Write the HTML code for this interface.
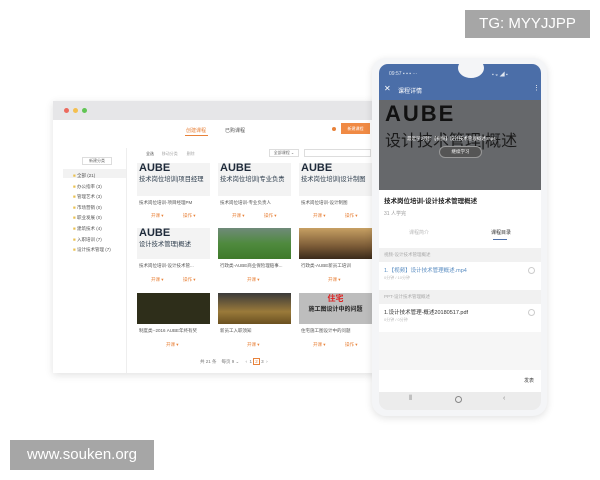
<!DOCTYPE html><html><head><meta charset="utf-8"><style>
*{margin:0;padding:0;box-sizing:border-box}
body{width:600px;height:480px;background:#fff;position:relative;overflow:hidden;font-family:"Liberation Sans","Noto Sans CJK SC",sans-serif;font-size:5px;color:#666}
.a{position:absolute}
.card{position:absolute;width:73px;height:70px}
.img{position:absolute;left:0;top:0;width:73px;height:33px;background:#eee;overflow:hidden}
.aube{font-weight:bold;font-size:11px;color:#1e2a3a;line-height:11px;padding-left:2px}
.sub{font-size:6.3px;color:#2a3a4a;padding-left:2px;white-space:nowrap}
.ct{position:absolute;top:37px;left:2px;font-size:4.5px;color:#555;white-space:nowrap}
.op{position:absolute;top:50px;font-size:4.5px;color:#e8823a}
</style></head><body>
<div class="a" style="left:465px;top:10px;width:125px;height:28px;background:#a6a6a6;color:#fff;font-size:15px;line-height:28px;text-align:center">TG: MYYJJPP</div>
<div class="a" style="left:10px;top:440px;width:144px;height:30px;background:#a6a6a6;color:#fff;font-size:15px;line-height:30px;text-align:center">www.souken.org</div>

<div class="a" style="left:53px;top:101px;width:325px;height:272px;background:#fff;box-shadow:0 2px 8px rgba(0,0,0,.12)">
 <div class="a" style="left:0;top:0;width:325px;height:19px;background:#e6e6e8"></div>
 <div class="a" style="left:11px;top:7px;width:5px;height:5px;border-radius:50%;background:#ec6a5e"></div>
 <div class="a" style="left:20px;top:7px;width:5px;height:5px;border-radius:50%;background:#f4bf4f"></div>
 <div class="a" style="left:29px;top:7px;width:5px;height:5px;border-radius:50%;background:#61c554"></div>
 <div class="a" style="left:133px;top:26px;color:#e8823a">创建课程</div>
 <div class="a" style="left:132px;top:34px;width:23px;height:1px;background:#e8823a"></div>
 <div class="a" style="left:172px;top:26px;color:#555">已购课程</div>
 <div class="a" style="left:279px;top:26px;width:4px;height:4px;border-radius:50%;background:#e8823a"></div>
 <div class="a" style="left:288px;top:22px;width:29px;height:11px;background:#f08a44;color:#fff;font-size:4px;line-height:11px;text-align:center">新建课程</div>
 <div class="a" style="left:9px;top:47px;width:65px;height:225px;border-right:1px solid #eee"></div>
 <div class="a" style="left:29px;top:56px;width:30px;height:8px;border:1px solid #ddd;font-size:4px;text-align:center;line-height:6px">新建分类</div>
 <div class="a" style="left:10px;top:68px;width:63px;height:9px;background:#f2f2f2"></div>
 <div class="a" style="left:20px;top:70px;line-height:10.6px;font-size:4.5px;color:#555">
  <span style="color:#e9c04f">■</span> 全部 (21)<br><span style="color:#e9c04f">■</span> 办公指率 (3)<br><span style="color:#e9c04f">■</span> 管理艺术 (3)<br><span style="color:#e9c04f">■</span> 市场营销 (0)<br><span style="color:#e9c04f">■</span> 职业发展 (0)<br><span style="color:#e9c04f">■</span> 建筑技术 (4)<br><span style="color:#e9c04f">■</span> 入职培训 (7)<br><span style="color:#e9c04f">■</span> 设计技术管理 (7)</div>
 <div class="a" style="left:93px;top:50px;font-size:4px;color:#444">全选 &nbsp;&nbsp;&nbsp;&nbsp;&nbsp; <span style="color:#aaa">移动分类 &nbsp;&nbsp;&nbsp;&nbsp;&nbsp;&nbsp; 删除</span></div>
 <div class="a" style="left:216px;top:48px;width:30px;height:8px;border:1px solid #ddd;font-size:4px;line-height:6px;text-align:center">全部课程 ⌄</div>
 <div class="a" style="left:251px;top:48px;width:67px;height:8px;border:1px solid #ddd"></div>
</div>

<div class="a" style="left:137px;top:163px;width:240px;height:190px">
 <div class="card" style="left:0;top:0"><div class="img" style="background:#f3f3f3"><div class="aube">AUBE</div><div class="sub">技术岗位培训|项目经理</div></div><div class="ct">技术岗位培训-项目经理PM</div><div class="op" style="left:14px">开课 ▾</div><div class="op" style="left:46px">操作 ▾</div></div>
 <div class="card" style="left:81px;top:0"><div class="img" style="background:#f3f3f3"><div class="aube">AUBE</div><div class="sub">技术岗位培训|专业负责</div></div><div class="ct">技术岗位培训-专业负责人</div><div class="op" style="left:14px">开课 ▾</div><div class="op" style="left:46px">操作 ▾</div></div>
 <div class="card" style="left:162px;top:0"><div class="img" style="background:#f3f3f3"><div class="aube">AUBE</div><div class="sub">技术岗位培训|设计制图</div></div><div class="ct">技术岗位培训-设计制图</div><div class="op" style="left:14px">开课 ▾</div><div class="op" style="left:46px">操作 ▾</div></div>
 <div class="card" style="left:0;top:65px"><div class="img" style="height:31px;background:#f3f3f3"><div class="aube">AUBE</div><div class="sub">设计技术管理|概述</div></div><div class="ct" style="top:35px">技术岗位培训-设计技术管...</div><div class="op" style="left:14px;top:49px">开课 ▾</div><div class="op" style="left:46px;top:49px">操作 ▾</div></div>
 <div class="card" style="left:81px;top:65px"><div class="img" style="height:31px;background:linear-gradient(#6f8a7a,#4f8a3e 50%,#3e7a2a)"></div><div class="ct" style="top:35px">行政类-AUBE商业保险理赔事...</div><div class="op" style="left:29px;top:49px">开课 ▾</div></div>
 <div class="card" style="left:162px;top:65px"><div class="img" style="height:31px;background:linear-gradient(#c7a063,#7a5a36 60%,#3a2a1a)"></div><div class="ct" style="top:35px">行政类-AUBE新员工培训</div><div class="op" style="left:29px;top:49px">开课 ▾</div></div>
 <div class="card" style="left:0;top:130px"><div class="img" style="height:31px;background:#2e2e1a"></div><div class="ct" style="top:35px">制度类--2016 AUBE年终有奖</div><div class="op" style="left:29px;top:49px">开课 ▾</div></div>
 <div class="card" style="left:81px;top:130px"><div class="img" style="height:31px;background:linear-gradient(#3a3a3a,#9a7a3a 60%,#6a5020)"></div><div class="ct" style="top:35px">新员工入职须知</div><div class="op" style="left:29px;top:49px">开课 ▾</div></div>
 <div class="card" style="left:162px;top:130px"><div class="img" style="height:31px;background:#bdbdbd;text-align:center"><div style="color:#d22;font-size:8px;font-weight:bold">住宅</div><div style="font-size:6px;font-weight:bold;color:#222">施工图设计中的问题</div></div><div class="ct" style="top:35px">住宅施工图设计中的问题</div><div class="op" style="left:14px;top:49px">开课 ▾</div><div class="op" style="left:46px;top:49px">操作 ▾</div></div>
</div>
<div class="a" style="left:200px;top:359px;font-size:4.5px;color:#777">共 21 条 &nbsp;&nbsp; 每页 9 ⌄ &nbsp;&nbsp;&nbsp; ‹ &nbsp;1 <span style="border:1px solid #e8823a;color:#e8823a;padding:0 1px">2</span> 3 &nbsp;›</div>

<div class="a" style="left:372px;top:58px;width:175px;height:358px;border-radius:14px;background:#f4f5f7;box-shadow:0 2px 8px rgba(0,0,0,.12)"></div>
<div class="a" style="left:379px;top:64px;width:162px;height:346px;border-radius:9px;overflow:hidden;background:#f6f6f6">
 <div class="a" style="left:0;top:0;width:162px;height:36px;background:#4b6ea8"></div>
 <div class="a" style="left:79px;top:-6px;width:26px;height:20px;border-radius:50%;background:#f4f5f7"></div>
 <div class="a" style="left:10px;top:7px;color:#dfe6f0;font-size:5px">09:57 ▪ ▪ ▪ ···</div>
 <div class="a" style="left:113px;top:7px;color:#dfe6f0;font-size:5px">▪ ◒ ◢ ▪</div>
 <div class="a" style="left:5px;top:20px;color:#fff;font-size:8px">✕</div>
 <div class="a" style="left:19px;top:22px;color:#fff;font-size:6px">课程详情</div>
 <div class="a" style="left:154px;top:20px;color:#fff;font-size:7px">⋮</div>
 <div class="a" style="left:0;top:36px;width:162px;height:90px;background:#66686b"></div>
 <div class="a" style="left:6px;top:37px;font-size:22px;font-weight:bold;color:#111;letter-spacing:2px">AUBE</div>
 <div class="a" style="left:6px;top:63px;font-size:16px;color:#1a1a1a;white-space:nowrap">设计技术管理|概述</div>
 <div class="a" style="left:28px;top:72px;font-size:4.5px;color:#fff;white-space:nowrap">最近学习到：【视频】设计技术管理概述.mp4</div>
 <div class="a" style="left:60px;top:82px;width:43px;height:12px;border-radius:6px;background:#555;border:1px solid #999;color:#fff;font-size:4.5px;line-height:10px;text-align:center">继续学习</div>
 <div class="a" style="left:0;top:126px;width:162px;height:40px;background:#fff"></div>
 <div class="a" style="left:5px;top:131px;font-size:6.5px;font-weight:bold;color:#222">技术岗位培训-设计技术管理概述</div>
 <div class="a" style="left:5px;top:146px;font-size:5px;color:#999">31 人学完</div>
 <div class="a" style="left:0;top:160px;width:162px;height:24px;background:#fff"></div>
 <div class="a" style="left:30px;top:165px;font-size:5px;color:#bbb">课程简介</div>
 <div class="a" style="left:112px;top:165px;font-size:5px;color:#333">课程目录</div>
 <div class="a" style="left:114px;top:175px;width:14px;height:1px;background:#4b6ea8"></div>
 <div class="a" style="left:0;top:184px;width:162px;height:14px;background:#f1f1f1;font-size:4.5px;color:#aaa;padding:4px 5px">视频-设计技术管理概述</div>
 <div class="a" style="left:0;top:198px;width:162px;height:28px;background:#fff"></div>
 <div class="a" style="left:5px;top:202px;font-size:5.5px;color:#5b8ec2">1.【视频】设计技术管理概述.mp4</div>
 <div class="a" style="left:5px;top:211px;font-size:4px;color:#bbb">0分钟 / 10分钟</div>
 <div class="a" style="left:149px;top:203px;width:7px;height:7px;border-radius:50%;border:1px solid #ccc"></div>
 <div class="a" style="left:0;top:226px;width:162px;height:14px;background:#f1f1f1;font-size:4.5px;color:#aaa;padding:4px 5px">PPT-设计技术管理概述</div>
 <div class="a" style="left:0;top:240px;width:162px;height:28px;background:#fff"></div>
 <div class="a" style="left:5px;top:244px;font-size:5.5px;color:#333">1.设计技术管理-概述20180517.pdf</div>
 <div class="a" style="left:5px;top:253px;font-size:4px;color:#bbb">0分钟 / 0分钟</div>
 <div class="a" style="left:149px;top:245px;width:7px;height:7px;border-radius:50%;border:1px solid #ccc"></div>
 <div class="a" style="left:0;top:306px;width:162px;height:22px;background:#fff"></div>
 <div class="a" style="left:145px;top:313px;font-size:5px;color:#444">发表</div>
 <div class="a" style="left:0;top:328px;width:162px;height:18px;background:#ececec;font-size:7px;color:#888"><span class="a" style="left:30px;top:3px">⦀</span><span class="a" style="left:76px;top:4px;width:7px;height:7px;border:1px solid #888;border-radius:50%"></span><span class="a" style="left:124px;top:3px">‹</span></div>
</div>
</body></html>
